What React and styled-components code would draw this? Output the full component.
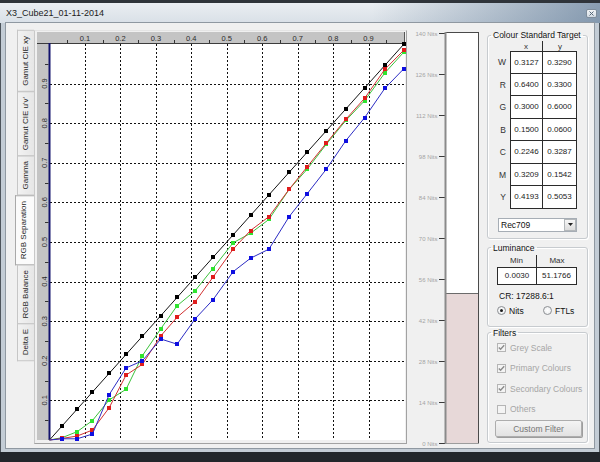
import React from "react";
import styled, { createGlobalStyle } from "styled-components";

const GlobalStyle = createGlobalStyle`
	html, body {
		margin: 0;
		padding: 0;
		background: #22262b;
	}
	body {
		font-family: "Liberation Sans", Arial, sans-serif;
	}
	* {
		box-sizing: border-box;
	}
`;

const FONT = "Liberation Sans, Arial, sans-serif";

const Window = styled.div`
	width: 600px;
	height: 462px;
	display: flex;
	flex-direction: column;
	padding: 0 6px 4px;
	background: #c3ccd5;
	border-bottom: 10px solid #22262b;
	box-shadow: inset 1px 0 0 #4d545b, inset -1px 0 0 #4d545b;
	overflow: hidden;
`;
const TitleBar = styled.div`
	height: 23px;
	margin: 0 -6px;
	padding: 0 3px 0 6px;
	display: flex;
	align-items: center;
	justify-content: space-between;
	border-top: 3px solid #2f343a;
	background: linear-gradient(to right, rgba(233, 237, 241, 0) 62%, rgba(74, 104, 136, 0.6) 100%),
		linear-gradient(to bottom, #eaeef2, #d9e0e7);

	.title {
		font-size: 9px;
		color: #1b1b1b;
		white-space: nowrap;
	}
`;
const CloseButton = styled.div`
	width: 11px;
	height: 9px;
	display: grid;
	place-items: center;
	border: 1px solid #7e8d9c;
	border-radius: 2px;
	background: linear-gradient(#f3f5f7, #d3dbe3);
`;
const Client = styled.div`
	flex: 1;
	display: flex;
	align-items: flex-start;
	padding: 7px 6px 0 11px;
	background: #f0f0f0;
	box-shadow: 0 0 0 1px #8f98a1;
`;
const TabColumn = styled.div`
	width: 17px;
	display: flex;
	flex-direction: column;
	align-items: flex-end;
`;
const Tab = styled.div`
	writing-mode: vertical-rl;
	transform: rotate(180deg);
	width: ${(p) => (p.$active ? "19px" : "17px")};
	margin-right: 0;
	padding: 5px 0;
	font-size: 8px;
	line-height: 16px;
	text-align: center;
	white-space: nowrap;
	color: #1e1e1e;
	border: 1px solid ${(p) => (p.$active ? "#a9a9a9" : "#c6c6c6")};
	border-left: none;
	background: ${(p) => (p.$active ? "#fbfbfb" : "linear-gradient(to left, #f2f2f2, #e6e6e6)")};
	& + & {
		margin-top: -1px;
	}
`;
const TabPage = styled.div`
	width: 373px;
	height: 414px;
	border: 1px solid #a2a2a2;
	border-top-color: #e4e4e4;
	border-left-color: #c8c8c8;
	background: #f0f0f0;
`;
const GaugeBox = styled.div`
	width: 74px;
	height: 414px;
`;
const SidePanel = styled.div`
	width: 101px;
	margin-left: 6px;
	display: flex;
	flex-direction: column;
`;
const GroupBox = styled.fieldset`
	margin: ${(p) => p.$top || 0}px 0 0;
	padding: 0 0 ${(p) => p.$bottom}px;
	min-width: 0;
	border: 1px solid #c7cbcf;
	border-radius: 3px;
	box-shadow: inset 1px 1px 0 #fff, 1px 1px 0 #fff;
`;
const Legend = styled.legend`
	margin-left: 3px;
	padding: 0 2px;
	font-size: 8.5px;
	line-height: 10px;
	color: #111;
`;
const Body = styled.div`
	padding: ${(p) => p.$top || 0}px 0 0 9px;
	display: flex;
	flex-direction: column;
	align-items: flex-start;
`;
const TargetGrid = styled.div`
	display: grid;
	grid-template-columns: 13px 33px 34px;
	grid-template-rows: 10px repeat(7, 22.5px);
`;
const HeadCell = styled.div`
	display: flex;
	align-items: center;
	justify-content: center;
	font-size: 8px;
	color: #333;
	border-right: ${(p) => (p.$divider ? "1px solid #2b2b2b" : "none")};
`;
const RowLabel = styled.div`
	display: flex;
	align-items: center;
	justify-content: flex-end;
	padding-right: 4px;
	font-size: 8.5px;
	color: #333;
`;
const ValueCell = styled.div`
	display: flex;
	align-items: center;
	justify-content: center;
	font-size: 8px;
	color: #222;
	background: #fff;
	border-right: 1px solid #2b2b2b;
	border-bottom: 1px solid #2b2b2b;
	border-left: ${(p) => (p.$first ? "1px solid #2b2b2b" : "none")};
	border-top: ${(p) => (p.$top ? "1px solid #2b2b2b" : "none")};
`;
const Select = styled.div`
	width: 79px;
	height: 14px;
	margin: 9px 0 0 1px;
	display: flex;
	align-items: center;
	justify-content: space-between;
	padding: 0 0 0 2px;
	border: 1px solid #a6adb5;
	background: #fff;
	font-size: 8.5px;
	color: #111;
`;
const SelectButton = styled.div`
	width: 12px;
	height: 12px;
	display: grid;
	place-items: center;
	border: 1px solid #b3b7ba;
	background: linear-gradient(#f6f6f6, #dcdcdc);
`;
const LumGrid = styled.div`
	display: grid;
	grid-template-columns: 40px 40px;
	grid-template-rows: 12px 18px;
`;
const LumValue = styled.div`
	display: flex;
	align-items: center;
	justify-content: center;
	font-size: 8px;
	color: #222;
	background: #fff;
	border: 1px solid #2b2b2b;
	border-left: ${(p) => (p.$first ? "1px solid #2b2b2b" : "none")};
`;
const InfoLine = styled.div`
	margin-top: 5px;
	padding-left: 2px;
	height: 12px;
	line-height: 12px;
	font-size: 8.5px;
	color: #111;
`;
const RadioRow = styled.div`
	margin-top: 3px;
	height: 12px;
	display: grid;
	grid-template-columns: 46px auto;
	align-items: center;
`;
const RadioLabel = styled.label`
	display: flex;
	align-items: center;
	gap: 3px;
	font-size: 8.5px;
	color: #111;
`;
const RadioDot = styled.span`
	width: 9px;
	height: 9px;
	border-radius: 50%;
	border: 1px solid #8c8f93;
	background: radial-gradient(circle, #fff 0%, #e7e9eb 100%);
	display: grid;
	place-items: center;

	&::after {
		content: "";
		width: 3px;
		height: 3px;
		border-radius: 50%;
		background: ${(p) => (p.$checked ? "#1a1a1a" : "transparent")};
	}
`;
const CheckRow = styled.label`
	height: 20.5px;
	display: flex;
	align-items: center;
	gap: 4px;
	font-size: 8.5px;
	color: #a6a6a6;
`;
const CheckBox = styled.span`
	width: 9px;
	height: 9px;
	display: grid;
	place-items: center;
	border: 1px solid #b5b5b5;
	background: #f4f4f4;
`;
const FilterButton = styled.div`
	width: 87px;
	height: 17px;
	margin: 0.5px 0 0 -2px;
	display: grid;
	place-items: center;
	font-size: 8.5px;
	color: #767676;
	border: 1px solid #adadad;
	border-radius: 2px;
	background: linear-gradient(#f4f4f4, #e2e2e2);
	box-shadow: 1px 1px 0 #9d9d9d;
`;

const XS = [0, 0.036, 0.078, 0.121, 0.168, 0.216, 0.262, 0.314, 0.36, 0.411, 0.461, 0.518, 0.567, 0.619, 0.676, 0.727, 0.781, 0.836, 0.889, 0.946, 1.0];
const SERIES = [
	{ id: "ref", line: "#141414", mark: "#000", ys: XS },
	{
		id: "green",
		line: "#3cc23c",
		mark: "#2fe42f",
		ys: [0, 0.006, 0.021, 0.049, 0.101, 0.128, 0.213, 0.281, 0.339, 0.377, 0.433, 0.498, 0.522, 0.557, 0.633, 0.684, 0.747, 0.807, 0.857, 0.927, 0.98],
	},
	{
		id: "red",
		line: "#d23232",
		mark: "#e01c1c",
		ys: [0, 0.004, 0.01, 0.025, 0.081, 0.164, 0.191, 0.263, 0.31, 0.349, 0.411, 0.482, 0.529, 0.564, 0.633, 0.69, 0.75, 0.81, 0.863, 0.936, 0.985],
	},
	{
		id: "blue",
		line: "#2c2cc4",
		mark: "#0e0ee0",
		ys: [0, 0.003, 0.003, 0.015, 0.114, 0.182, 0.2, 0.255, 0.242, 0.306, 0.354, 0.425, 0.459, 0.482, 0.564, 0.622, 0.684, 0.756, 0.814, 0.888, 0.938],
	},
];

const TABS = ["Gamut CIE xy", "Gamut CIE u'v'", "Gamma", "RGB Separation", "RGB Balance", "Delta E"];

const TARGET = [
	["W", "0.3127", "0.3290"],
	["R", "0.6400", "0.3300"],
	["G", "0.3000", "0.6000"],
	["B", "0.1500", "0.0600"],
	["C", "0.2246", "0.3287"],
	["M", "0.3209", "0.1542"],
	["Y", "0.4193", "0.5053"],
];

const FILTERS = [
	{ label: "Grey Scale", checked: true },
	{ label: "Primary Colours", checked: true },
	{ label: "Secondary Colours", checked: true },
	{ label: "Others", checked: false },
];

const px = (v) => 49.5 + v * 354.5;
const py = (v) => 440 - v * 396;
const crisp = (v) => Math.round(v) + 0.5;

function GammaChart() {
	const majors = Array.from({ length: 9 }, (_, i) => (i + 1) / 10);
	const halves = Array.from({ length: 10 }, (_, i) => i / 10 + 0.05);

	return (
		<svg width="371" height="412" viewBox="35 31 371 412" fontFamily={FONT}>
			<rect x="37" y="32" width="368" height="12" fill="#c4c4c4" />
			<rect x="37" y="44" width="12" height="396" fill="#c4c4c4" />
			<rect x="50" y="44" width="355" height="396" fill="#fff" />

			{majors.map((t) => (
				<line key={"gx" + t} x1={crisp(px(t))} x2={crisp(px(t))} y1="44" y2="440" stroke="#111" strokeDasharray="2 2" />
			))}
			{majors.map((t) => (
				<line key={"gy" + t} x1="50" x2="405" y1={crisp(py(t))} y2={crisp(py(t))} stroke="#111" strokeDasharray="2 2" />
			))}

			<line x1="37" x2="405" y1="43.5" y2="43.5" stroke="#3c3c3c" />
			<line x1="404.5" x2="404.5" y1="32" y2="44" stroke="#555" />
			<rect x="48.5" y="43" width="2" height="397" fill="#12126c" />

			{halves.map((t) => (
				<line key={"tx" + t} x1={crisp(px(t))} x2={crisp(px(t))} y1="40" y2="43" stroke="#333" />
			))}
			{halves.map((t) => (
				<line key={"ty" + t} x1="45" x2="48.5" y1={crisp(py(t))} y2={crisp(py(t))} stroke="#333" />
			))}
			{majors.map((t) => (
				<text key={"lx" + t} x={px(t)} y="41" textAnchor="middle" fontSize="7.5" fill="#2a2a2a">
					{t.toFixed(1)}
				</text>
			))}
			{majors.map((t) => (
				<text
					key={"ly" + t}
					transform={`translate(46.5 ${py(t)}) rotate(-90)`}
					textAnchor="middle"
					fontSize="7.5"
					fill="#2a2a2a"
				>
					{t.toFixed(1)}
				</text>
			))}

			{SERIES.map((s) => (
				<g key={s.id}>
					<polyline
						points={XS.map((x, i) => `${px(x)},${py(s.ys[i])}`).join(" ")}
						fill="none"
						stroke={s.line}
						strokeWidth="1"
					/>
					{XS.slice(1).map((x, i) => (
						<rect
							key={i}
							x={Math.round(px(x)) - 2}
							y={Math.round(py(s.ys[i + 1])) - 2}
							width="4"
							height="4"
							fill={s.mark}
						/>
					))}
				</g>
			))}
		</svg>
	);
}

function NitsGauge({ value, max }) {
	const ty = (k) => crisp(443 - k * 41.03);
	const fillTop = Math.round(443 - (value / max) * 410.3);

	return (
		<svg width="74" height="414" viewBox="407 30 74 414" overflow="visible" fontFamily={FONT}>
			{Array.from({ length: 11 }, (_, k) => (
				<g key={k}>
					<text x="437.5" y={ty(k) + 2} textAnchor="end" fontSize="6" fill="#a4a4a4">
						{k * 14} Nits
					</text>
					<line x1="439" x2="445" y1={ty(k)} y2={ty(k)} stroke="#3a3a3a" />
				</g>
			))}
			<rect x="445.5" y="32.5" width="33" height="410.5" fill="#fff" stroke="#4a4a4a" />
			<rect x="446" y={fillTop} width="32" height={443 - fillTop} fill="#e7d8d8" />
			<line x1="446" x2="478" y1={fillTop + 0.5} y2={fillTop + 0.5} stroke="#6b6b6b" />
			<line x1="445.5" x2="445.5" y1="32" y2="443.5" stroke="#8a8a8a" strokeWidth="2" />
		</svg>
	);
}

function CheckMark() {
	return (
		<svg width="7" height="7" viewBox="0 0 7 7">
			<polyline points="0.8,3.4 2.6,5.3 6.2,1.2" fill="none" stroke="#8c8c8c" strokeWidth="1.4" />
		</svg>
	);
}

export default function App() {
	return (
		<>
			<GlobalStyle />
			<Window>
				<TitleBar>
					<span className="title">X3_Cube21_01-11-2014</span>
					<CloseButton>
						<svg width="5" height="5" viewBox="0 0 5 5">
							<path d="M0.5 0.5 L4.5 4.5 M4.5 0.5 L0.5 4.5" stroke="#56687a" strokeWidth="1" />
						</svg>
					</CloseButton>
				</TitleBar>

				<Client>
					<TabColumn>
						{TABS.map((t) => (
							<Tab key={t} $active={t === "RGB Separation"}>
								{t}
							</Tab>
						))}
					</TabColumn>

					<TabPage>
						<GammaChart />
					</TabPage>

					<GaugeBox>
						<NitsGauge value={51.1766} max={140} />
					</GaugeBox>

					<SidePanel>
						<GroupBox $bottom={6}>
							<Legend>Colour Standard Target</Legend>
							<Body $top={1}>
								<TargetGrid>
									<HeadCell />
									<HeadCell $divider>x</HeadCell>
									<HeadCell>y</HeadCell>
									{TARGET.map(([name, x, y], i) => (
										<React.Fragment key={name}>
											<RowLabel>{name}</RowLabel>
											<ValueCell $first $top={i === 0}>
												{x}
											</ValueCell>
											<ValueCell $top={i === 0}>{y}</ValueCell>
										</React.Fragment>
									))}
								</TargetGrid>
								<Select>
									<span>Rec709</span>
									<SelectButton>
										<svg width="5" height="3" viewBox="0 0 5 3">
											<path d="M0 0 H5 L2.5 3 Z" fill="#222" />
										</svg>
									</SelectButton>
								</Select>
							</Body>
						</GroupBox>

						<GroupBox $top={4} $bottom={9}>
							<Legend>Luminance</Legend>
							<Body $top={2}>
								<LumGrid>
									<HeadCell $divider>Min</HeadCell>
									<HeadCell>Max</HeadCell>
									<LumValue $first>0.0030</LumValue>
									<LumValue>51.1766</LumValue>
								</LumGrid>
								<InfoLine>CR: 17288.6:1</InfoLine>
								<RadioRow>
									<RadioLabel>
										<RadioDot $checked />
										Nits
									</RadioLabel>
									<RadioLabel>
										<RadioDot />
										FTLs
									</RadioLabel>
								</RadioRow>
							</Body>
						</GroupBox>

						<GroupBox $top={1} $bottom={5}>
							<Legend>Filters</Legend>
							<Body>
								{FILTERS.map((f) => (
									<CheckRow key={f.label}>
										<CheckBox>{f.checked && <CheckMark />}</CheckBox>
										{f.label}
									</CheckRow>
								))}
								<FilterButton>Custom Filter</FilterButton>
							</Body>
						</GroupBox>
					</SidePanel>
				</Client>
			</Window>
		</>
	);
}
